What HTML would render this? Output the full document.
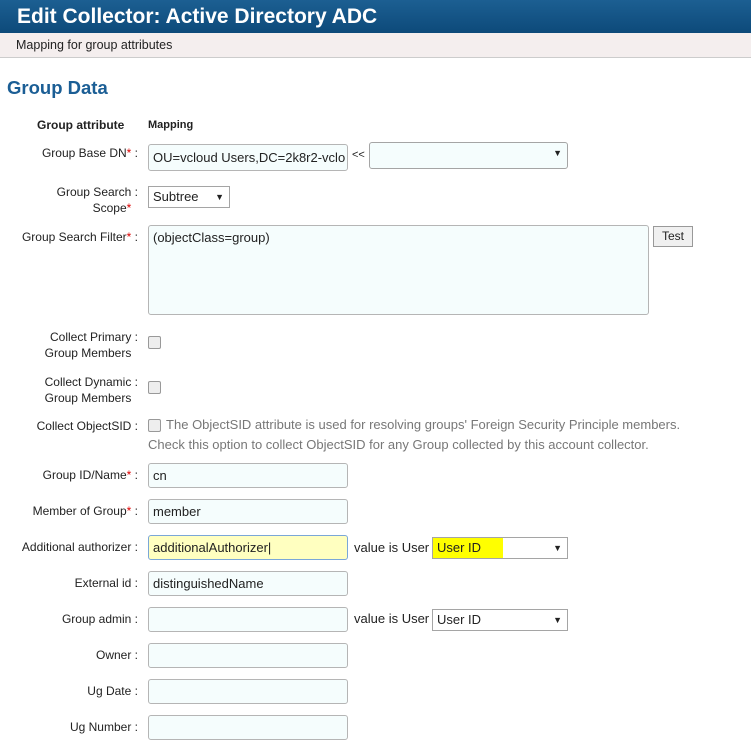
<!DOCTYPE html>
<html><head><style>
body{margin:0;width:751px;height:740px;overflow:hidden;background:#fff;font-family:"Liberation Sans",sans-serif;font-size:12px;color:#222;position:relative}
.a{position:absolute}
.hdr{left:0;top:0;width:751px;height:33px;background:linear-gradient(#1c5f92,#0d4a7a);color:#fff;font-weight:bold;font-size:21px;line-height:33px;padding-left:17px;box-sizing:border-box}
.sub{left:0;top:33px;width:751px;height:25px;background:#f4eeee;border-bottom:1px solid #ccc;font-size:12.5px;line-height:25px;padding-left:16px;box-sizing:border-box}
.lbl{right:613px;text-align:right;line-height:16px;white-space:nowrap}
.in{left:148px;width:200px;height:25px;border:1px solid #b5b5b5;border-radius:3px;background:#f5fdfd;box-sizing:border-box;font-size:13px;line-height:23px;padding-left:4px}
.sel{border:1px solid #a5a5a5;background:#fff;box-sizing:border-box;font-size:13px;line-height:20px;padding-left:4px}
.sel:after{content:"▼";position:absolute;right:5px;top:0;font-size:9px}
.r{color:#d00}
.cb{left:148px;width:11px;height:11px;border:1px solid #999;border-radius:2px;background:#eee}
</style></head><body>
<div class="a hdr">Edit Collector: Active Directory ADC</div>
<div class="a sub">Mapping for group attributes</div>
<div class="a" style="left:7px;top:77px;font-size:18.5px;font-weight:bold;color:#1b5e95">Group Data</div>
<div class="a" style="left:37px;top:118px;font-weight:bold">Group attribute</div>
<div class="a" style="left:148px;top:119px;font-weight:bold;font-size:11px">Mapping</div>

<div class="a lbl" style="top:145px">Group Base DN<span class="r">*</span> :</div>
<div class="a in" style="top:144px;width:200px;height:27px;line-height:25px;overflow:hidden;white-space:nowrap">OU=vcloud Users,DC=2k8r2-vclo</div>
<div class="a" style="left:352px;top:149px;font-size:11px">&lt;&lt;</div>
<div class="a sel" style="left:369px;top:142px;width:199px;height:27px;border-radius:3px;background:#f5fdfd"></div>

<div class="a lbl" style="top:184px">Group Search :<br>Scope<span class="r">*</span>&nbsp;&nbsp;</div>
<div class="a sel" style="left:148px;top:186px;width:82px;height:22px">Subtree</div>

<div class="a lbl" style="top:229px">Group Search Filter<span class="r">*</span> :</div>
<div class="a in" style="top:225px;width:501px;height:90px;line-height:24px">(objectClass=group)</div>
<div class="a" style="left:653px;top:226px;width:40px;height:21px;border:1px solid #999;background:#f0f0f0;box-sizing:border-box;text-align:center;line-height:19px">Test</div>

<div class="a lbl" style="top:329px">Collect Primary :<br>Group Members&nbsp;&nbsp;</div>
<div class="a cb" style="top:336px"></div>
<div class="a lbl" style="top:374px">Collect Dynamic :<br>Group Members&nbsp;&nbsp;</div>
<div class="a cb" style="top:381px"></div>
<div class="a lbl" style="top:418px">Collect ObjectSID :</div>
<div class="a cb" style="top:419px"></div>
<div class="a" style="left:148px;top:415px;color:#777;font-size:13px;line-height:20px;white-space:nowrap">&nbsp;&nbsp;&nbsp;&nbsp;&nbsp;The ObjectSID attribute is used for resolving groups' Foreign Security Principle members.<br>Check this option to collect ObjectSID for any Group collected by this account collector.</div>

<div class="a lbl" style="top:467px">Group ID/Name<span class="r">*</span> :</div>
<div class="a in" style="top:463px">cn</div>
<div class="a lbl" style="top:503px">Member of Group<span class="r">*</span> :</div>
<div class="a in" style="top:499px">member</div>
<div class="a lbl" style="top:539px">Additional authorizer :</div>
<div class="a in" style="top:535px;background:#ffffc0;border-color:#7aa7d8">additionalAuthorizer|</div>
<div class="a" style="left:354px;top:540px;font-size:13px">value is User</div>
<div class="a sel" style="left:432px;top:537px;width:136px;height:22px"><span style="background:#ffff00;display:inline-block;width:66px;margin-left:-4px;padding-left:4px">User ID</span></div>
<div class="a lbl" style="top:575px">External id :</div>
<div class="a in" style="top:571px">distinguishedName</div>
<div class="a lbl" style="top:611px">Group admin :</div>
<div class="a in" style="top:607px"></div>
<div class="a" style="left:354px;top:611px;font-size:13px">value is User</div>
<div class="a sel" style="left:432px;top:609px;width:136px;height:22px">User ID</div>
<div class="a lbl" style="top:647px">Owner :</div>
<div class="a in" style="top:643px"></div>
<div class="a lbl" style="top:683px">Ug Date :</div>
<div class="a in" style="top:679px"></div>
<div class="a lbl" style="top:719px">Ug Number :</div>
<div class="a in" style="top:715px"></div>
</body></html>
